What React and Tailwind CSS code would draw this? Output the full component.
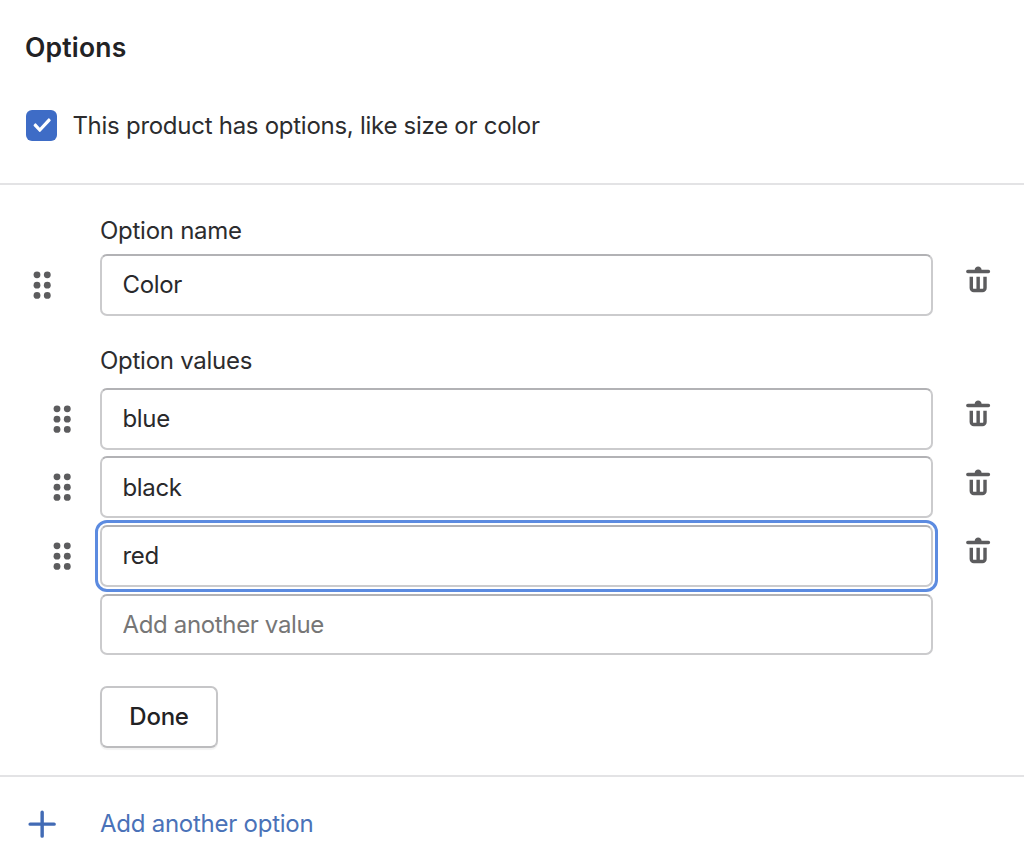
import { useState } from "react";

function DragHandle() {
  return (
    <svg viewBox="0 0 20 20" className="size-[34.3px] shrink-0 fill-[#5c5c5e]">
      <circle cx="7" cy="4" r="2" />
      <circle cx="13" cy="4" r="2" />
      <circle cx="7" cy="10" r="2" />
      <circle cx="13" cy="10" r="2" />
      <circle cx="7" cy="16" r="2" />
      <circle cx="13" cy="16" r="2" />
    </svg>
  );
}

function TrashButton({ onClick }) {
  return (
    <button type="button" aria-label="Delete" onClick={onClick} className="mb-[9px] ml-[27.6px] shrink-0">
      <svg viewBox="0 0 20 20" className="block size-[34.3px] fill-[#5c5c5e]">
        <path d="M8 3.994c0-1.101.895-1.994 2-1.994s2 .893 2 1.994h4c.552 0 1 .446 1 .997a1 1 0 0 1-1 .997h-12c-.552 0-1-.447-1-.997s.448-.997 1-.997h4zm-3 10.514v-6.508h2v6.508a.5.5 0 0 0 .5.498h1.5v-7.006h2v7.006h1.5a.5.5 0 0 0 .5-.498v-6.508h2v6.508a2.496 2.496 0 0 1-2.5 2.492h-5c-1.38 0-2.5-1.116-2.5-2.492z" />
      </svg>
    </button>
  );
}

function TextField({ focused, ...props }) {
  return (
    <div
      className={
        focused
          ? "h-[61.7px] w-[833px] shrink-0 rounded-[7px] outline-[3px] outline-offset-[2px] outline-[#5c8be0]"
          : "h-[61.7px] w-[833px] shrink-0 rounded-[7px]"
      }
    >
      <input
        type="text"
        className="block size-full rounded-[7px] border-2 border-[#cbcbcd] border-t-[#b2b2b5] bg-white px-[20.5px] tracking-[-0.35px] text-[#29292b] outline-none placeholder:text-[#767676]"
        {...props}
      />
    </div>
  );
}

function ValueRow({ value, focused, onChange, onDelete }) {
  return (
    <div className="flex items-center">
      <div className="flex w-[100px] shrink-0 pl-[45.4px]">
        <DragHandle />
      </div>
      <TextField value={value} focused={focused} onChange={onChange} />
      <TrashButton onClick={onDelete} />
    </div>
  );
}

export default function App() {
  const [name, setName] = useState("Color");
  const [values, setValues] = useState(["blue", "black", "red"]);
  const [focusedIndex] = useState(2);

  function updateValue(index, next) {
    setValues(values.map((v, i) => (i === index ? next : v)));
  }

  function removeValue(index) {
    setValues(values.filter((_, i) => i !== index));
  }

  return (
    <div className="h-[863px] w-[1024px] overflow-hidden bg-white font-['Inter','Liberation_Sans',sans-serif] text-[24px] leading-[34px] tracking-[-0.27px] text-[#2c2c2e]">
      <section className="h-[185px] border-b-2 border-[#e3e3e5] pt-[30px]">
        <h2 className="pl-[25px] text-[26.5px] font-semibold tracking-[0.2px] text-[#222224]">Options</h2>
        <label className="mt-[45px] flex items-center pl-[26.4px]">
          <span className="mb-[2px] flex size-[31px] items-center justify-center rounded-[6px] bg-[#3e6cc6]">
            <svg viewBox="0 0 20 20" className="size-[34.3px] shrink-0 fill-white">
              <path d="M8.315 13.859l-3.182-3.417a.506.506 0 0 1 0-.684l.643-.683a.437.437 0 0 1 .642 0l2.22 2.393 4.942-5.327a.436.436 0 0 1 .643 0l.643.684a.504.504 0 0 1 0 .683l-5.91 6.35a.437.437 0 0 1-.642 0" />
            </svg>
          </span>
          <span className="ml-[15px]">This product has options, like size or color</span>
        </label>
      </section>

      <section className="h-[592px] border-b-2 border-[#e3e3e5] pt-[29px]">
        <div className="pl-[100px]">Option name</div>
        <div className="mt-[6px] flex items-center">
          <div className="flex w-[100px] shrink-0 pl-[24.8px]">
            <DragHandle />
          </div>
          <TextField value={name} onChange={(e) => setName(e.target.value)} />
          <TrashButton />
        </div>

        <div className="mt-[28.2px] pl-[100px]">Option values</div>
        <div className="mt-[10px] flex flex-col gap-[6.9px]">
          {values.map((value, i) => (
            <ValueRow
              key={i}
              value={value}
              focused={i === focusedIndex}
              onChange={(e) => updateValue(i, e.target.value)}
              onDelete={() => removeValue(i)}
            />
          ))}
          <div className="pl-[100px]">
            <TextField placeholder="Add another value" />
          </div>
        </div>

        <button
          type="button"
          className="mt-[30.5px] ml-[100px] h-[62px] w-[118px] rounded-[7px] border-2 border-[#c6c6c8] border-b-[#bcbcbe] pt-px font-medium text-[#222224] shadow-[0_2px_1px_rgba(0,0,0,0.05)]"
        >
          Done
        </button>
      </section>

      <button type="button" className="mt-[30px] flex items-center tracking-[-0.25px] text-[#4a72b8]">
        <span className="flex w-[100px] pl-[24.8px]">
          <svg viewBox="0 0 20 20" className="size-[34.3px] fill-[#426bb5]">
            <path d="M17 9h-6V3a1 1 0 1 0-2 0v6H3a1 1 0 1 0 0 2h6v6a1 1 0 1 0 2 0v-6h6a1 1 0 1 0 0-2z" />
          </svg>
        </span>
        Add another option
      </button>
    </div>
  );
}
